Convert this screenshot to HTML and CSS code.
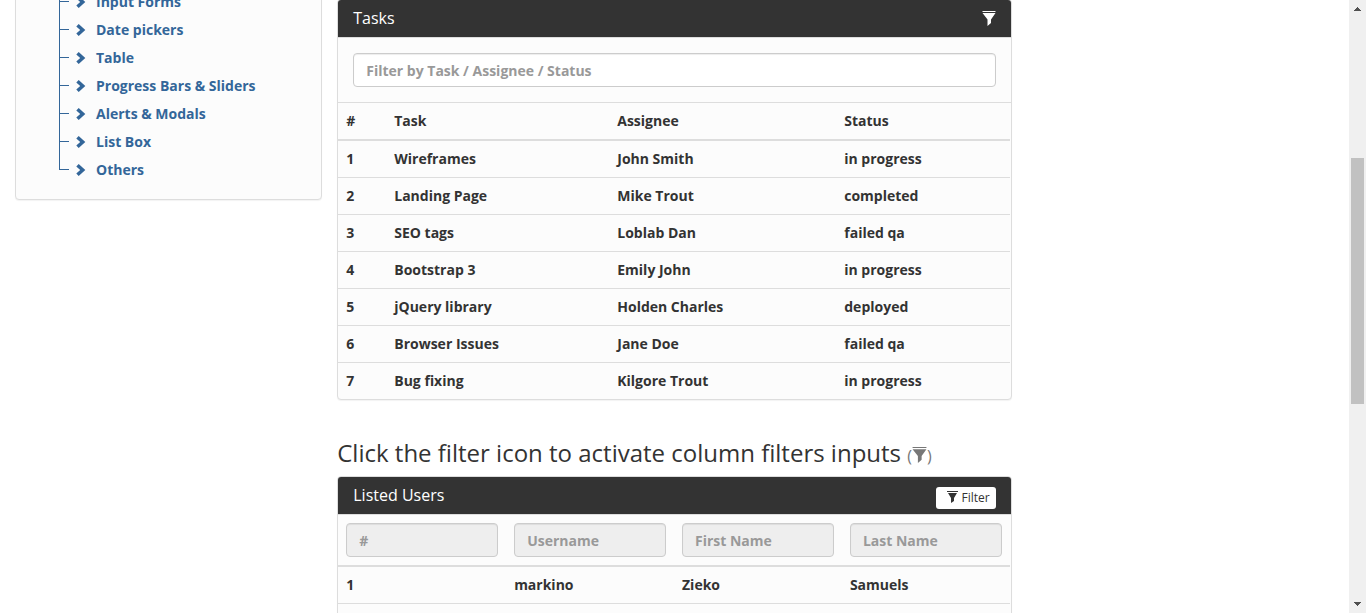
FILE: index.html
```html
<!DOCTYPE html>
<html lang="en">
<head>
<meta charset="utf-8">
<meta name="viewport" content="width=device-width, initial-scale=1">
<title>Table filters</title>
<link rel="stylesheet" href="styles.css">
</head>
<body>
<svg class="defs" aria-hidden="true">
  <symbol id="funnel" viewBox="0 0 14 15"><path d="M.5 0h13v1H.5zM.5 2h13L9 8.500V12l-3.500 3V8.500z"/></symbol>
  <symbol id="funnel-small" viewBox="0 0 11 12"><path d="M0 0h11v1H0zM1 2h9L7 7v3l-3 2V7z"/></symbol>
  <symbol id="chevron" viewBox="0 0 10 12"><path d="M2.700 0 9.300 6 2.700 12 .3 9.600 4.200 6 .3 2.400z"/></symbol>
</svg>
<div class="window">
  <div class="page">
    <nav class="sidebar">
      <ul class="panel tree">
        <li><svg class="chevron"><use href="#chevron"/></svg><a href="#">Input Forms</a></li>
        <li><svg class="chevron"><use href="#chevron"/></svg><a href="#">Date pickers</a></li>
        <li><svg class="chevron"><use href="#chevron"/></svg><a href="#">Table</a></li>
        <li><svg class="chevron"><use href="#chevron"/></svg><a href="#">Progress Bars &amp; Sliders</a></li>
        <li><svg class="chevron"><use href="#chevron"/></svg><a href="#">Alerts &amp; Modals</a></li>
        <li><svg class="chevron"><use href="#chevron"/></svg><a href="#">List Box</a></li>
        <li><svg class="chevron"><use href="#chevron"/></svg><a href="#">Others</a></li>
      </ul>
    </nav>
    <main class="content">
      <section class="panel">
        <header class="panel-heading">
          <h3 class="panel-title">Tasks</h3>
          <button class="icon-button" type="button" aria-label="Toggle filter"><svg class="funnel"><use href="#funnel"/></svg></button>
        </header>
        <div class="panel-body">
          <input class="field" type="text" placeholder="Filter by Task / Assignee / Status" aria-label="Filter by Task / Assignee / Status">
        </div>
        <table class="table tasks">
          <colgroup><col class="col-id"><col class="col-task"><col class="col-assignee"><col></colgroup>
          <thead><tr><th>#</th><th>Task</th><th>Assignee</th><th>Status</th></tr></thead>
          <tbody>
            <tr><td>1</td><td>Wireframes</td><td>John Smith</td><td>in progress</td></tr>
            <tr><td>2</td><td>Landing Page</td><td>Mike Trout</td><td>completed</td></tr>
            <tr><td>3</td><td>SEO tags</td><td>Loblab Dan</td><td>failed qa</td></tr>
            <tr><td>4</td><td>Bootstrap 3</td><td>Emily John</td><td>in progress</td></tr>
            <tr><td>5</td><td>jQuery library</td><td>Holden Charles</td><td>deployed</td></tr>
            <tr><td>6</td><td>Browser Issues</td><td>Jane Doe</td><td>failed qa</td></tr>
            <tr><td>7</td><td>Bug fixing</td><td>Kilgore Trout</td><td>in progress</td></tr>
          </tbody>
        </table>
      </section>
      <h2 class="section-title">Click the filter icon to activate column filters inputs <small>(<svg class="funnel"><use href="#funnel"/></svg>)</small></h2>
      <section class="panel">
        <header class="panel-heading">
          <h3 class="panel-title">Listed Users</h3>
          <button class="filter-button" type="button"><svg class="funnel-small"><use href="#funnel-small"/></svg>Filter</button>
        </header>
        <table class="table">
          <thead><tr>
            <th><input class="field" type="text" placeholder="#" aria-label="#" disabled></th>
            <th><input class="field" type="text" placeholder="Username" aria-label="Username" disabled></th>
            <th><input class="field" type="text" placeholder="First Name" aria-label="First Name" disabled></th>
            <th><input class="field" type="text" placeholder="Last Name" aria-label="Last Name" disabled></th>
          </tr></thead>
          <tbody>
            <tr><td>1</td><td>markino</td><td>Zieko</td><td>Samuels</td></tr>
            <tr><td></td><td></td><td></td><td></td></tr>
          </tbody>
        </table>
      </section>
    </main>
  </div>
  <div class="scrollbar" aria-hidden="true">
    <svg class="arrow" viewBox="0 0 17 17"><path d="M8 7h1v1h1v1h1v1h1v1H5v-1h1V9h1V8h1z"/></svg>
    <div class="before"></div>
    <div class="thumb"></div>
    <div class="after"></div>
    <svg class="arrow" viewBox="0 0 17 17"><path d="M5 6h7v1h-1v1h-1v1H9v1H8V9H7V8H6V7H5z"/></svg>
  </div>
</div>
</body>
</html>
```
FILE: styles.css
```css
* { box-sizing: border-box; }
body {
  margin: 0;
  background: #fff;
  color: #333;
  font: 700 14px/20px "Open Sans", sans-serif;
}
.defs { display: none; }
svg { fill: currentColor; }
.window { display: flex; height: 100vh; overflow: hidden; }
.page { flex: 1; display: flex; align-items: flex-start; overflow: hidden; }
.sidebar { width: 25%; padding: 0 15px; margin-top: -28px; }
.content { width: 50%; margin-top: -1px; }
.panel {
  margin: 0 0 20px;
  background: #fcfcfc;
  border: 1px solid #ddd;
  border-radius: 4px;
  box-shadow: 0 1px 1px rgba(0, 0, 0, .05);
}

.tree { list-style: none; padding: 15px 15px 15px 43px; }
.tree li { display: flex; align-items: center; height: 28px; color: #369; }
.tree li::before {
  content: "";
  width: 10px;
  height: 28px;
  margin-right: 7px;
  background:
    linear-gradient(#369, #369) 0 0 / 1px 100% no-repeat,
    linear-gradient(#369, #369) 0 13px / 10px 1px no-repeat;
}
.tree li:last-child::before { background-size: 1px 14px, 10px 1px; }
.tree a { color: #369; text-decoration: none; }
.chevron { width: 10px; height: 12px; margin-right: 10px; }

.panel-heading {
  display: flex;
  justify-content: space-between;
  align-items: flex-start;
  height: 38px;
  padding: 10px 15px;
  background: #333;
  color: #fff;
  border-bottom: 1px solid #ddd;
  border-radius: 3px 3px 0 0;
}
.panel-title { margin: 0; font-size: 16px; font-weight: 400; line-height: 17px; }
.panel-body { padding: 15px; border-bottom: 1px solid #ddd; }
.icon-button { display: flex; padding: 1px 0 0; border: 0; background: none; color: #fff; }
.funnel { width: 14px; height: 15px; }
.filter-button {
  display: flex;
  align-items: center;
  gap: 4px;
  height: 22px;
  padding: 0 6px 0 11px;
  border: 0;
  border-radius: 3px;
  background: #fff;
  color: #333;
  font: 400 12px/18px "Open Sans", sans-serif;
}
.funnel-small { width: 11px; height: 12px; margin-bottom: 2px; }

.field {
  display: block;
  width: 100%;
  height: 34px;
  padding: 6px 12px;
  border: 1px solid #ccc;
  border-radius: 4px;
  background: #fff;
  box-shadow: inset 0 1px 1px rgba(0, 0, 0, .075);
  color: #555;
  font: inherit;
}
.field::placeholder { color: #999; opacity: 1; }
.field:disabled { background: #eee; }

.table { width: calc(100% - 1px); table-layout: fixed; border-collapse: separate; border-spacing: 0; }
.table th, .table td { padding: 8px; text-align: left; font-weight: 700; }
.table th { border-bottom: 2px solid #ddd; }
.table tr + tr td { border-top: 1px solid #ddd; }
.col-id { width: 48px; }
.col-task { width: 223px; }
.col-assignee { width: 227px; }

.section-title { margin: 40px 0 10px; font-size: 24px; font-weight: 400; line-height: 26px; }
.section-title small { color: #777; font-size: 16px; line-height: 1; }
.section-title .funnel { width: 15px; height: 16px; vertical-align: -1px; }

.scrollbar { width: 17px; display: flex; flex-direction: column; background: #f0f0f0; }
.arrow { width: 17px; height: 17px; color: #505050; }
.before { flex: 141; }
.thumb { flex: 246; margin: 0 2px; background: #c1c1c1; }
.after { flex: 192; }
```
